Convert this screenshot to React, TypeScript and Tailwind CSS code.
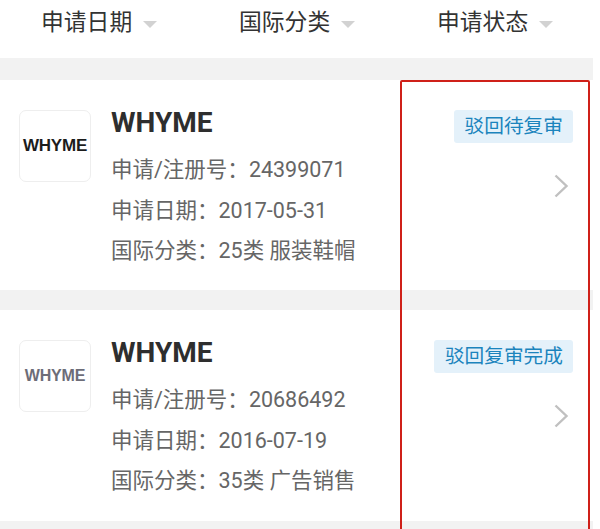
const cjk = "font-['Roboto','Noto_Sans_CJK_SC',sans-serif]";

const Caret = () => (
  <span className="ml-[11px] mt-[3px] h-0 w-0 border-x-[7px] border-t-[7px] border-x-transparent border-t-[#d2d2d2]" />
);

const Chevron = () => (
  <svg width="16" height="24" viewBox="0 0 16 24" fill="none" className="mr-[4px]">
    <path d="M2.5 1.5 13.5 12 2.5 22.5" stroke="#c0c0c0" strokeWidth="2.4" />
  </svg>
);

const filters = ["申请日期", "国际分类", "申请状态"];

const records = [
  {
    logoColor: "text-[#1c1c1c]",
    logoSize: "text-[17px]",
    status: "驳回待复审",
    regNo: "24399071",
    date: "2017-05-31",
    category: "25类 服装鞋帽",
    height: "h-[210px]",
  },
  {
    logoColor: "text-[#6d6d78]",
    logoSize: "text-[16px]",
    status: "驳回复审完成",
    regNo: "20686492",
    date: "2016-07-19",
    category: "35类 广告销售",
    height: "h-[211px]",
  },
];

type RecordItem = (typeof records)[number];

const Card = ({ item }: { item: RecordItem }) => (
  <div className={`flex ${item.height} bg-white pl-[19px] pr-[20px] pt-[30px]`}>
    <div className="flex h-[72px] w-[72px] shrink-0 items-center justify-center rounded-[7px] border border-[#eeeeee] bg-white">
      <span className={`font-['Liberation_Sans',sans-serif] font-bold tracking-[-0.2px] ${item.logoSize} ${item.logoColor}`}>
        WHYME
      </span>
    </div>
    <div className="ml-[20px] flex-1">
      <div className="-mt-[7px] font-['Roboto',sans-serif] text-[28px] leading-[40px] font-bold text-[#2e2e2e]">
        WHYME
      </div>
      <div className="mt-[7px] text-[21.5px] leading-[40.5px] text-[#666666]">
        <div>申请/注册号：{item.regNo}</div>
        <div>申请日期：{item.date}</div>
        <div>国际分类：{item.category}</div>
      </div>
    </div>
    <div className="flex flex-col items-end">
      <div className="flex h-[33px] items-center rounded-[3px] bg-[#e4f1fa] pl-[11px] pr-[10px] text-[19.7px] text-[#1b84bd]">
        {item.status}
      </div>
      <div className="mt-[31px]">
        <Chevron />
      </div>
    </div>
  </div>
);

export default function App() {
  return (
    <div className={`relative h-[529px] w-[600px] overflow-hidden bg-white ${cjk}`}>
      <div className="w-[593px] bg-[#f2f2f2]">
        <div className="flex h-[58px] items-start bg-white pl-[41px] pt-[6px]">
          {filters.map((label) => (
            <div key={label} className="flex w-[198px] shrink-0 items-center text-[22.8px] leading-[34px] text-[#333333]">
              {label}
              <Caret />
            </div>
          ))}
        </div>
        <div className="flex flex-col gap-[20px] pb-[8px] pt-[22px]">
          {records.map((item) => (
            <Card key={item.regNo} item={item} />
          ))}
        </div>
      </div>
      <div className="absolute left-[400px] top-[80px] h-[460px] w-[190px] rounded-[2px] border-2 border-[#cf2019]" />
    </div>
  );
}
